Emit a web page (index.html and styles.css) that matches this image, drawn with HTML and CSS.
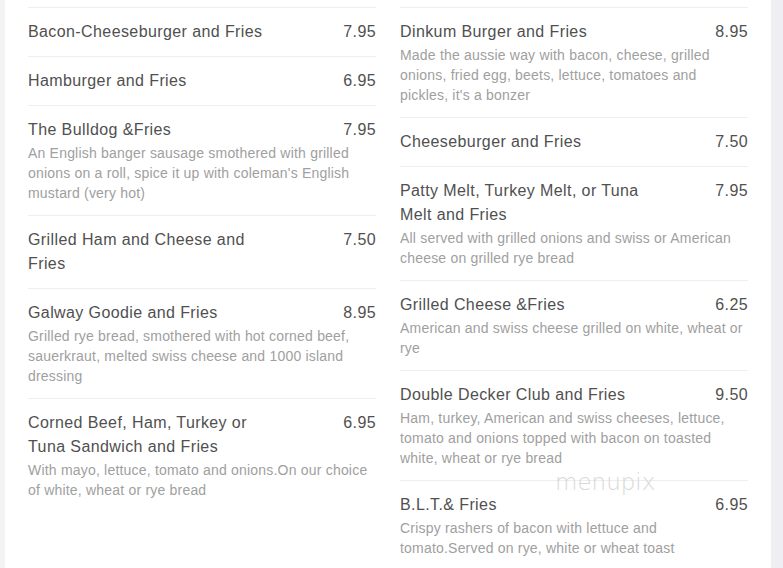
FILE: index.html
```html
<!DOCTYPE html>
<html>
<head>
<meta charset="utf-8">
<link rel="stylesheet" href="styles.css">
</head>
<body>
<div class="page">
  <div class="panel">
    <div class="col">
      <div class="item">
        <div class="row"><div class="name">Bacon-Cheeseburger and Fries</div><div class="price">7.95</div></div>
      </div>
      <div class="item">
        <div class="row"><div class="name">Hamburger and Fries</div><div class="price">6.95</div></div>
      </div>
      <div class="item">
        <div class="row"><div class="name">The Bulldog &amp;Fries</div><div class="price">7.95</div></div>
        <div class="desc">An English banger sausage smothered with grilled onions on a roll, spice it up with coleman's English mustard (very hot)</div>
      </div>
      <div class="item">
        <div class="row"><div class="name">Grilled Ham and Cheese and Fries</div><div class="price">7.50</div></div>
      </div>
      <div class="item">
        <div class="row"><div class="name">Galway Goodie and Fries</div><div class="price">8.95</div></div>
        <div class="desc">Grilled rye bread, smothered with hot corned beef, sauerkraut, melted swiss cheese and 1000 island dressing</div>
      </div>
      <div class="item last">
        <div class="row"><div class="name">Corned Beef, Ham, Turkey or Tuna Sandwich and Fries</div><div class="price">6.95</div></div>
        <div class="desc">With mayo, lettuce, tomato and onions.On our choice of white, wheat or rye bread</div>
      </div>
    </div>
    <div class="col">
      <div class="item">
        <div class="row"><div class="name">Dinkum Burger and Fries</div><div class="price">8.95</div></div>
        <div class="desc">Made the aussie way with bacon, cheese, grilled onions, fried egg, beets, lettuce, tomatoes and pickles, it's a bonzer</div>
      </div>
      <div class="item">
        <div class="row"><div class="name">Cheeseburger and Fries</div><div class="price">7.50</div></div>
      </div>
      <div class="item">
        <div class="row"><div class="name">Patty Melt, Turkey Melt, or Tuna Melt and Fries</div><div class="price">7.95</div></div>
        <div class="desc">All served with grilled onions and swiss or American cheese on grilled rye bread</div>
      </div>
      <div class="item">
        <div class="row"><div class="name">Grilled Cheese &amp;Fries</div><div class="price">6.25</div></div>
        <div class="desc">American and swiss cheese grilled on white, wheat or rye</div>
      </div>
      <div class="item">
        <div class="row"><div class="name">Double Decker Club and Fries</div><div class="price">9.50</div></div>
        <div class="desc">Ham, turkey, American and swiss cheeses, lettuce, tomato and onions topped with bacon on toasted white, wheat or rye bread</div>
      </div>
      <div class="item last">
        <div class="row"><div class="name">B.L.T.&amp; Fries</div><div class="price">6.95</div></div>
        <div class="desc">Crispy rashers of bacon with lettuce and tomato.Served on rye, white or wheat toast</div>
      </div>
    </div>
    <div class="watermark">menupix</div>
  </div>
</div>
</body>
</html>
```

FILE: styles.css
```css
html, body {
  margin: 0;
  padding: 0;
  background: #eeeef3;
}
body {
  font-family: "Liberation Sans", Arial, sans-serif;
}
.page {
  display: flex;
  height: 568px;
  overflow: hidden;
}
.panel {
  position: relative;
  width: 767px;
  margin-left: 4px;
  box-sizing: border-box;
  background: #fff;
  border-left: 1px solid #f4f4f4;
  padding: 7px 23px 0 23px;
  display: grid;
  grid-template-columns: 1fr 1fr;
  column-gap: 24px;
  align-items: start;
}
.page::before {
  content: "";
  position: absolute;
  left: 0;
  top: 0;
  width: 4px;
  height: 568px;
  background: #f3f3f3;
}
.col {
  display: flex;
  flex-direction: column;
}
.item {
  border-top: 1px solid #eeeeee;
  padding: 12px 0 12px 0;
}
.row {
  display: flex;
  justify-content: space-between;
  align-items: flex-start;
}
.name {
  max-width: 245px;
  font-size: 16px;
  line-height: 24px;
  letter-spacing: 0.4px;
  color: #505050;
}
.price {
  font-size: 16px;
  line-height: 24px;
  letter-spacing: 0.4px;
  color: #505050;
}
.desc {
  margin-top: 1px;
  font-size: 14px;
  line-height: 20px;
  letter-spacing: 0.2px;
  color: #a0a0a0;
}
.watermark {
  position: absolute;
  left: 550px;
  top: 469px;
  font-family: "DejaVu Sans", sans-serif;
  font-weight: 200;
  font-size: 23px;
  color: #d8d8d8;
}
```
